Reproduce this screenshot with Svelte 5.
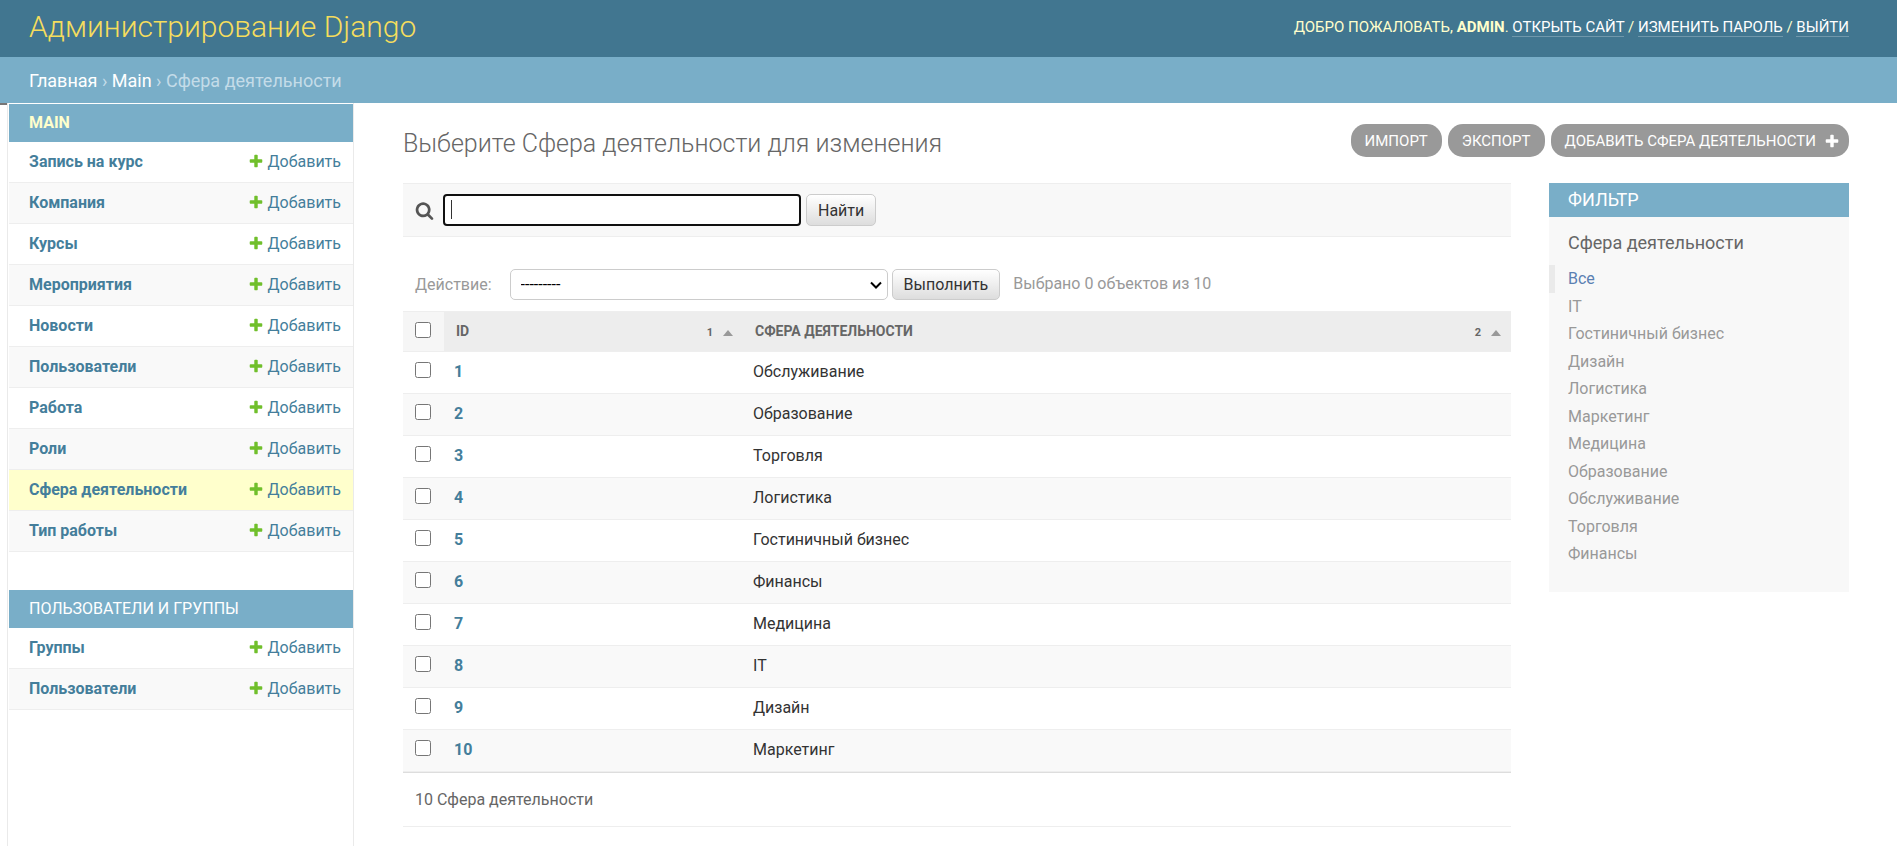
<script>
  const plus =
    'M1600 796v192q0 40-28 68t-68 28h-416v416q0 40-28 68t-68 28h-192q-40 0-68-28t-28-68v-416h-416q-40 0-68-28t-28-68v-192q0-40 28-68t68-28h416v-416q0-40 28-68t68-28h192q40 0 68 28t28 68v416h416q40 0 68 28t28 68z';
  const lens =
    'M1216 832q0-185-131.5-316.5t-316.5-131.5-316.5 131.5-131.5 316.5 131.5 316.5 316.5 131.5 316.5-131.5 131.5-316.5zm512 832q0 52-38 90t-90 38q-54 0-90-38l-343-342q-179 124-399 124-143 0-273.5-55.5t-225-150-150-225-55.5-273.5 55.5-273.5 150-225 225-150 273.5-55.5 273.5 55.5 225 150 150 225 55.5 273.5q0 220-124 399l343 343q37 37 37 90z';

  const apps = [
    {
      name: 'Main',
      active: true,
      models: [
        'Запись на курс', 'Компания', 'Курсы', 'Мероприятия', 'Новости',
        'Пользователи', 'Работа', 'Роли', 'Сфера деятельности', 'Тип работы'
      ]
    },
    { name: 'Пользователи и группы', active: false, models: ['Группы', 'Пользователи'] }
  ];

  const rows = [
    'Обслуживание', 'Образование', 'Торговля', 'Логистика', 'Гостиничный бизнес',
    'Финансы', 'Медицина', 'IT', 'Дизайн', 'Маркетинг'
  ];

  const filters = [
    'Все', 'IT', 'Гостиничный бизнес', 'Дизайн', 'Логистика', 'Маркетинг',
    'Медицина', 'Образование', 'Обслуживание', 'Торговля', 'Финансы'
  ];
</script>

<div class="page">
  <header>
    <a class="brand" href="#home">Администрирование Django</a>
    <div class="user">
      Добро пожаловать, <strong>admin</strong>.
      <a href="#site">Открыть сайт</a> / <a href="#password">Изменить пароль</a> /
      <a href="#logout">Выйти</a>
    </div>
  </header>

  <nav class="crumbs" aria-label="Навигация">
    <a href="#home">Главная</a> › <a href="#main">Main</a> › Сфера деятельности
  </nav>

  <div class="body">
    <button class="toggle" aria-label="Переключить меню"></button>
    <nav class="sidebar" aria-label="Приложения">
      {#each apps as app}
        <table>
          <caption class:active={app.active}><a href="#app">{app.name}</a></caption>
          <tbody>
            {#each app.models as model}
              <tr class:current={model === 'Сфера деятельности'}>
                <th scope="row"><a href="#model">{model}</a></th>
                <td>
                  <a class="add" href="#add">
                    <svg viewBox="0 0 1792 1792" width="16" height="16" aria-hidden="true"><path fill="#70bf2b" d={plus} /></svg>Добавить</a>
                </td>
              </tr>
            {/each}
          </tbody>
        </table>
      {/each}
    </nav>

    <main>
      <div class="heading">
        <h1>Выберите Сфера деятельности для изменения</h1>
        <div class="tools">
          <a href="#import">Импорт</a>
          <a href="#export">Экспорт</a>
          <a class="new" href="#add">Добавить Сфера деятельности
            <svg viewBox="0 0 1792 1792" width="16" height="16" aria-hidden="true"><path fill="#fff" d={plus} /></svg></a>
        </div>
      </div>

      <div class="columns">
        <div class="list">
          <form class="search">
            <label for="q" aria-label="Поиск">
              <svg viewBox="0 0 1792 1792" width="19" height="19" aria-hidden="true"><path fill="#555" d={lens} /></svg>
            </label>
            <div class="field"><input id="q" type="text" /><span class="caret"></span></div>
            <button type="button">Найти</button>
          </form>

          <div class="actions">
            <label for="action">Действие:</label>
            <div class="select">
              <select id="action"><option>---------</option></select>
              <svg viewBox="0 0 12 8" width="12" height="8" aria-hidden="true"><path d="M1 1.500 6 6.500l5-5" fill="none" stroke="#000" stroke-width="2" /></svg>
            </div>
            <button type="button">Выполнить</button>
            <span>Выбрано 0 объектов из 10</span>
          </div>

          <table class="results">
            <thead>
              <tr>
                <th class="check"><input type="checkbox" aria-label="Выбрать все" /></th>
                <th class="id">
                  <div><a href="#id">ID</a><span class="sort">1<i></i></span></div>
                </th>
                <th>
                  <div><a href="#name">Сфера деятельности</a><span class="sort">2<i></i></span></div>
                </th>
              </tr>
            </thead>
            <tbody>
              {#each rows as row, i}
                <tr>
                  <td class="check"><input type="checkbox" aria-label={row} /></td>
                  <th scope="row"><a href="#row">{i + 1}</a></th>
                  <td>{row}</td>
                </tr>
              {/each}
            </tbody>
          </table>

          <p class="paginator">10 Сфера деятельности</p>
        </div>

        <aside>
          <h2>Фильтр</h2>
          <h3>Сфера деятельности</h3>
          <ul>
            {#each filters as filter, i}
              <li class:selected={i === 0}><a href="#filter">{filter}</a></li>
            {/each}
          </ul>
        </aside>
      </div>
    </main>
  </div>
</div>

<style>
  :global(body) {
    margin: 0;
    background: #fff;
  }

  .page {
    display: flex;
    flex-direction: column;
    min-height: 100vh;
    font-family: Roboto, 'Liberation Sans', sans-serif;
    font-size: 16px;
    color: #333;
  }

  .page * {
    box-sizing: border-box;
  }

  a {
    color: #447e9b;
    text-decoration: none;
  }

  svg {
    display: block;
    flex: none;
  }

  h1, h2, h3, p, ul {
    margin: 0;
    padding: 0;
    font-weight: 400;
  }

  header {
    display: flex;
    align-items: center;
    justify-content: space-between;
    padding: 0 48px 4px 29px;
    height: 57px;
    background: #417690;
  }

  .brand {
    font-size: 30px;
    font-weight: 300;
    color: #f5dd5d;
  }

  .user {
    font-size: 15px;
    line-height: 18px;
    color: #ffc;
    text-transform: uppercase;
  }

  .user a {
    color: #fff;
    border-bottom: 1px solid rgba(255, 255, 255, 0.25);
  }

  .crumbs {
    padding: 2px 48px 0 29px;
    line-height: 44px;
    font-size: 18px;
    background: #79aec8;
    color: #c4dce8;
  }

  .crumbs a {
    color: #fff;
  }

  .body {
    display: flex;
    flex: 1;
  }

  .toggle {
    width: 7px;
    padding: 0;
    border: 0;
    border-top: 2px solid #767676;
    background: #fff;
  }

  .sidebar {
    flex: none;
    width: 347px;
    padding: 1px 0 0 1px;
    border-left: 1px solid #eaeaea;
    border-right: 1px solid #eaeaea;
  }

  .sidebar table {
    width: 100%;
    margin-bottom: 38px;
    border-collapse: separate;
    border-spacing: 0;
  }

  .sidebar caption {
    padding: 0 20px;
    line-height: 38px;
    font-size: 16px;
    text-align: left;
    text-transform: uppercase;
    background: #79aec8;
  }

  .sidebar caption a {
    color: #fff;
  }

  .sidebar caption.active a {
    color: #ffc;
    font-weight: 700;
  }

  .sidebar th,
  .sidebar td {
    height: 41px;
    padding: 0 0 2px 20px;
    border-bottom: 1px solid #eee;
    text-align: left;
    font-weight: 700;
  }

  .sidebar td {
    padding: 0 12px 2px 0;
    font-weight: 400;
  }

  .sidebar tr:nth-child(even) {
    background: #f9f9f9;
  }

  .sidebar tr.current {
    background: #ffc;
  }

  .add {
    display: flex;
    align-items: center;
    justify-content: flex-end;
    gap: 4px;
  }

  main {
    flex: 1;
    min-width: 0;
    padding: 21px 48px 17px 49px;
  }

  .heading {
    display: flex;
    justify-content: space-between;
    margin-bottom: 19px;
  }

  h1 {
    font-size: 25px;
    line-height: 40px;
    font-weight: 300;
    color: #666;
  }

  .tools {
    display: flex;
    gap: 6px;
  }

  .tools a {
    display: flex;
    align-items: center;
    gap: 8px;
    height: 33px;
    padding: 0 14px;
    border-radius: 15px;
    background: #999;
    color: #fff;
    font-size: 15px;
    text-transform: uppercase;
  }

  .tools .new {
    padding-right: 9px;
  }

  .columns {
    display: flex;
    align-items: flex-start;
    gap: 38px;
  }

  .list {
    flex: 1;
    min-width: 0;
  }

  .search {
    display: flex;
    align-items: center;
    padding: 10px 12px;
    border-top: 1px solid #eee;
    border-bottom: 1px solid #eee;
    background: #f8f8f8;
  }

  .field {
    position: relative;
    margin: 0 5px 0 9px;
  }

  .field input {
    display: block;
    width: 358px;
    height: 32px;
    padding: 0 6px;
    border: 2px solid #101010;
    border-radius: 4px;
    background: #fff;
    font: inherit;
    outline: 0;
  }

  .caret {
    position: absolute;
    left: 8px;
    top: 6px;
    width: 1px;
    height: 19px;
    background: #333;
  }

  .search button,
  .actions button {
    height: 32px;
    padding: 0 11px;
    border: 1px solid #ccc;
    border-radius: 5px;
    background: linear-gradient(#fff, #ddd);
    color: #333;
    font: inherit;
  }

  .actions {
    display: flex;
    align-items: center;
    padding: 32px 12px 11px;
    color: #999;
  }

  .actions button {
    height: 31px;
  }

  .actions span {
    margin-left: 13px;
    padding-bottom: 2px;
  }

  .select {
    position: relative;
    margin: 0 4px 0 18px;
  }

  .select svg {
    position: absolute;
    right: 6px;
    top: 12px;
  }

  select {
    display: block;
    appearance: none;
    width: 378px;
    height: 31px;
    padding: 0 10px;
    border: 1px solid #ccc;
    border-radius: 5px;
    background: #fff;
    color: #000;
    font: inherit;
  }

  .results {
    width: 100%;
    border-collapse: separate;
    border-spacing: 0;
  }

  .results thead th {
    height: 41px;
    padding: 0 10px 2px 12px;
    border-top: 1px solid #eee;
    border-bottom: 1px solid #eee;
    background: #ededed;
    color: #666;
    font-size: 14px;
    text-align: left;
    text-transform: uppercase;
  }

  .results thead th.check {
    background: #f6f6f6;
  }

  .results thead a {
    color: #666;
  }

  .results thead div {
    display: flex;
    align-items: center;
    justify-content: space-between;
  }

  .sort {
    display: flex;
    align-items: center;
    gap: 10px;
    padding-top: 5px;
    font-size: 11px;
    line-height: 12px;
  }

  .sort i {
    border: 5px solid transparent;
    border-top: 0;
    border-bottom: 6px solid #999;
  }

  .results tbody td,
  .results tbody th {
    height: 42px;
    padding: 0 10px 2px;
    border-bottom: 1px solid #eee;
    text-align: left;
  }

  .results tbody tr:nth-child(even) {
    background: #f9f9f9;
  }

  .results .id {
    width: 299px;
  }

  .results thead .check,
  .results tbody .check {
    width: 41px;
    padding: 0 0 4px 12px;
  }

  .results tbody .check {
    padding-bottom: 6px;
  }

  .check input {
    display: block;
    width: 16px;
    height: 16px;
    margin: 0;
  }

  .paginator {
    padding: 0 12px;
    line-height: 53px;
    border-top: 1px solid #ddd;
    border-bottom: 1px solid #eee;
    color: #666;
  }

  aside {
    flex: none;
    width: 300px;
    padding-bottom: 24px;
    background: #f8f8f8;
  }

  h2 {
    padding: 0 19px;
    line-height: 34px;
    font-size: 18px;
    text-transform: uppercase;
    background: #79aec8;
    color: #fff;
  }

  h3 {
    padding: 12px 19px 8px;
    line-height: 28px;
    font-size: 18px;
    color: #666;
  }

  ul {
    list-style: none;
  }

  li {
    padding-left: 19px;
    line-height: 28px;
  }

  li:nth-child(even) {
    line-height: 27px;
  }

  li a {
    color: #999;
  }

  li.selected {
    padding-left: 13px;
    border-left: 6px solid #eaeaea;
  }

  li.selected a {
    color: #5b80b2;
  }
</style>
